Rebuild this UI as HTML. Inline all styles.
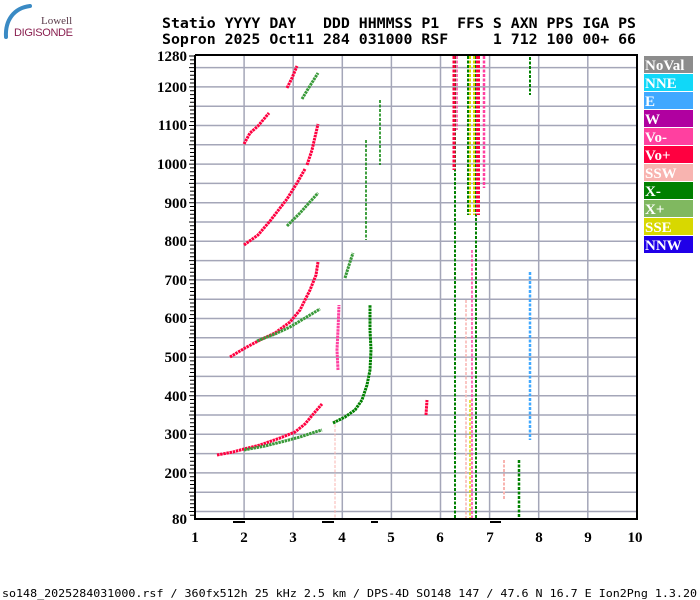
<!DOCTYPE html>
<html><head><meta charset="utf-8"><style>
body{margin:0;background:#fff;width:700px;height:600px;overflow:hidden}
svg{display:block}
</style></head><body>
<svg width="700" height="600" xmlns="http://www.w3.org/2000/svg">
<!-- logo -->
<path d="M6,37 C5,20 14,8 30,6" fill="none" stroke="#3a8ac4" stroke-width="4" stroke-linecap="round"/>
<text x="41" y="24" font-family="Liberation Serif,serif" font-size="11" fill="#5a3a4a">Lowell</text>
<text x="14" y="36" font-family="Liberation Sans,sans-serif" font-size="11" fill="#8a2050" textLength="59">DIGISONDE</text>
<!-- header -->
<g font-family="DejaVu Sans Mono,Liberation Mono,monospace" font-size="14.5" font-weight="bold" fill="#000">
<text x="162" y="28" xml:space="preserve" textLength="474" lengthAdjust="spacingAndGlyphs">Statio YYYY DAY   DDD HHMMSS P1  FFS S AXN PPS IGA PS</text>
<text x="162" y="44" xml:space="preserve" textLength="474" lengthAdjust="spacingAndGlyphs">Sopron 2025 Oct11 284 031000 RSF     1 712 100 00+ 66</text>
</g>
<!-- grid -->
<g stroke="#a4a6b8" stroke-width="1.5">
<line x1="195" y1="67.6" x2="637" y2="67.6"/><line x1="195" y1="86.9" x2="637" y2="86.9"/><line x1="195" y1="106.2" x2="637" y2="106.2"/><line x1="195" y1="125.5" x2="637" y2="125.5"/><line x1="195" y1="144.8" x2="637" y2="144.8"/><line x1="195" y1="164.1" x2="637" y2="164.1"/><line x1="195" y1="183.4" x2="637" y2="183.4"/><line x1="195" y1="202.7" x2="637" y2="202.7"/><line x1="195" y1="222" x2="637" y2="222"/><line x1="195" y1="241.3" x2="637" y2="241.3"/><line x1="195" y1="260.6" x2="637" y2="260.6"/><line x1="195" y1="279.9" x2="637" y2="279.9"/><line x1="195" y1="299.2" x2="637" y2="299.2"/><line x1="195" y1="318.5" x2="637" y2="318.5"/><line x1="195" y1="337.8" x2="637" y2="337.8"/><line x1="195" y1="357.1" x2="637" y2="357.1"/><line x1="195" y1="376.4" x2="637" y2="376.4"/><line x1="195" y1="395.7" x2="637" y2="395.7"/><line x1="195" y1="415" x2="637" y2="415"/><line x1="195" y1="434.3" x2="637" y2="434.3"/><line x1="195" y1="453.6" x2="637" y2="453.6"/><line x1="195" y1="472.9" x2="637" y2="472.9"/><line x1="195" y1="492.2" x2="637" y2="492.2"/><line x1="195" y1="511.5" x2="637" y2="511.5"/>
<line x1="244.1" y1="56" x2="244.1" y2="519"/><line x1="293.2" y1="56" x2="293.2" y2="519"/><line x1="342.3" y1="56" x2="342.3" y2="519"/><line x1="391.4" y1="56" x2="391.4" y2="519"/><line x1="440.5" y1="56" x2="440.5" y2="519"/><line x1="489.6" y1="56" x2="489.6" y2="519"/><line x1="538.7" y1="56" x2="538.7" y2="519"/><line x1="587.8" y1="56" x2="587.8" y2="519"/>
</g>
<!-- vertical band -->
<g stroke-dasharray="3 1.5">
<line x1="455" y1="56" x2="455" y2="519" stroke="#008000" stroke-width="2"/>
<line x1="454" y1="56" x2="454" y2="170" stroke="#ff0040" stroke-width="3"/>
<line x1="457" y1="56" x2="457" y2="130" stroke="#ff40a0" stroke-width="1.5"/>
<line x1="468" y1="56" x2="468" y2="215" stroke="#008000" stroke-width="2"/>
<line x1="470" y1="56" x2="470" y2="215" stroke="#d8d800" stroke-width="2"/>
<line x1="466" y1="300" x2="466" y2="519" stroke="#f8b4b0" stroke-width="1.5"/>
<line x1="476" y1="56" x2="476" y2="519" stroke="#008000" stroke-width="2"/>
<line x1="474" y1="56" x2="474" y2="215" stroke="#d8d800" stroke-width="2"/>
<line x1="478" y1="56" x2="478" y2="215" stroke="#ff0040" stroke-width="4"/>
<line x1="484" y1="56" x2="484" y2="188" stroke="#ff40a0" stroke-width="2.5"/>
<line x1="530" y1="272" x2="530" y2="440" stroke="#40a8ff" stroke-width="2.5"/>
<line x1="530" y1="57" x2="530" y2="95" stroke="#008000" stroke-width="2"/>
<line x1="519" y1="460" x2="519" y2="519" stroke="#008000" stroke-width="2.5"/>
<line x1="472" y1="250" x2="472" y2="519" stroke="#ff40a0" stroke-width="1.5"/>
<line x1="470" y1="400" x2="470" y2="519" stroke="#d8d800" stroke-width="1.5"/>
<line x1="504" y1="460" x2="504" y2="500" stroke="#f8b4b0" stroke-width="2"/>
<line x1="380" y1="100" x2="380" y2="165" stroke="#008000" stroke-width="1.5"/>
<line x1="366" y1="140" x2="366" y2="240" stroke="#008000" stroke-width="1.5"/>
<line x1="335" y1="420" x2="335" y2="519" stroke="#f8b4b0" stroke-width="1"/>
</g>
<!-- traces -->
<g fill="none" stroke-width="3" stroke-dasharray="2.5 0.7" stroke-linejoin="round">
<polyline stroke="#ff0040" points="217,455 233,452 244,449 260,445 280,438 295,432 305,424 315,412 322,404"/>
<polyline stroke="#3a9a3a" points="244,450 265,446 285,441 300,437 315,432 322,430"/>
<polyline stroke="#008000" points="333,423 345,417 355,410 362,400 367,385 370,370 371,350 370,330 370,305"/>
<polyline stroke="#ff0040" points="230,357 245,348 260,340 275,333 290,322 300,310 305,300 310,290 316,275 318,262"/>
<polyline stroke="#3a9a3a" points="257,341 275,334 290,327 305,318 320,309"/>
<polyline stroke="#ff40a0" points="338,370 337,350 338,330 339,305"/>
<polyline stroke="#3a9a3a" points="345,278 350,262 353,253"/>
<polyline stroke="#ff0040" points="244,245 258,235 270,221 287,199 297,183 305,169"/>
<polyline stroke="#3a9a3a" points="287,226 300,213 318,193"/>
<polyline stroke="#ff0040" points="244,144 250,133 258,126 269,113"/>
<polyline stroke="#ff0040" points="307,165 312,150 318,124"/>
<polyline stroke="#ff0040" points="287,88 292,78 297,66"/>
<polyline stroke="#3a9a3a" points="302,99 308,89 318,73"/>
<polyline stroke="#ff0040" points="426,415 427,400"/>
</g>
<!-- axes -->
<g stroke="#000" stroke-width="2">
<line x1="195" y1="55" x2="638" y2="55"/>
<line x1="195" y1="55" x2="195" y2="520"/>
<line x1="637" y1="55" x2="637" y2="520"/>
<line x1="194" y1="519" x2="638" y2="519"/>
<line x1="233" y1="522" x2="245" y2="522"/><line x1="322" y1="522" x2="334" y2="522"/><line x1="371" y1="522" x2="378" y2="522"/><line x1="490" y1="522" x2="501" y2="522"/>
</g>
<path d="M190,59.9h5M190,63.7h5M190,71.4h5M190,75.3h5M190,79.2h5M190,83h5M190,90.7h5M190,94.6h5M190,98.5h5M190,102.3h5M190,110h5M190,113.9h5M190,117.8h5M190,121.6h5M190,129.3h5M190,133.2h5M190,137.1h5M190,140.9h5M190,148.6h5M190,152.5h5M190,156.4h5M190,160.2h5M190,167.9h5M190,171.8h5M190,175.7h5M190,179.5h5M190,187.2h5M190,191.1h5M190,195h5M190,198.8h5M190,206.5h5M190,210.4h5M190,214.3h5M190,218.1h5M190,225.8h5M190,229.7h5M190,233.6h5M190,237.4h5M190,245.1h5M190,249h5M190,252.9h5M190,256.7h5M190,264.4h5M190,268.3h5M190,272.2h5M190,276h5M190,283.7h5M190,287.6h5M190,291.5h5M190,295.3h5M190,303h5M190,306.9h5M190,310.8h5M190,314.6h5M190,322.3h5M190,326.2h5M190,330.1h5M190,333.9h5M190,341.6h5M190,345.5h5M190,349.4h5M190,353.2h5M190,360.9h5M190,364.8h5M190,368.7h5M190,372.5h5M190,380.2h5M190,384.1h5M190,388h5M190,391.8h5M190,399.5h5M190,403.4h5M190,407.3h5M190,411.1h5M190,418.8h5M190,422.7h5M190,426.6h5M190,430.4h5M190,438.1h5M190,442h5M190,445.9h5M190,449.7h5M190,457.4h5M190,461.3h5M190,465.2h5M190,469h5M190,476.7h5M190,480.6h5M190,484.5h5M190,488.3h5M190,496h5M190,499.9h5M190,503.8h5M190,507.6h5M190,515.3h5M189,56h6M189,67.6h6M189,86.9h6M189,106.2h6M189,125.5h6M189,144.8h6M189,164.1h6M189,183.4h6M189,202.7h6M189,222h6M189,241.3h6M189,260.6h6M189,279.9h6M189,299.2h6M189,318.5h6M189,337.8h6M189,357.1h6M189,376.4h6M189,395.7h6M189,415h6M189,434.3h6M189,453.6h6M189,472.9h6M189,492.2h6M189,511.5h6" stroke="#000" stroke-width="1"/>
<!-- y labels -->
<g font-family="Liberation Serif,serif" font-size="15" font-weight="bold" text-anchor="end">
<text x="187" y="61">1280</text><text x="187" y="92">1200</text><text x="187" y="130">1100</text><text x="187" y="169">1000</text><text x="187" y="208">900</text><text x="187" y="246">800</text><text x="187" y="285">700</text><text x="187" y="323">600</text><text x="187" y="362">500</text><text x="187" y="401">400</text><text x="187" y="439">300</text><text x="187" y="478">200</text><text x="187" y="524">80</text>
</g>
<g font-family="Liberation Serif,serif" font-size="15" font-weight="bold" text-anchor="middle">
<text x="195" y="542">1</text><text x="244" y="542">2</text><text x="293" y="542">3</text><text x="342" y="542">4</text><text x="391" y="542">5</text><text x="440" y="542">6</text><text x="490" y="542">7</text><text x="539" y="542">8</text><text x="588" y="542">9</text><text x="635" y="542">10</text>
</g>
<!-- legend -->
<g font-family="Liberation Serif,serif" font-size="15" font-weight="bold" fill="#fff">
<rect x="644" y="56" width="49" height="17" fill="#8c8c8c"/><text x="645" y="70">NoVal</text>
<rect x="644" y="74" width="49" height="17" fill="#10d8f8"/><text x="645" y="88">NNE</text>
<rect x="644" y="92" width="49" height="17" fill="#40a8ff"/><text x="645" y="106">E</text>
<rect x="644" y="110" width="49" height="17" fill="#b000a0"/><text x="645" y="124">W</text>
<rect x="644" y="128" width="49" height="17" fill="#ff40a0"/><text x="645" y="142">Vo-</text>
<rect x="644" y="146" width="49" height="17" fill="#ff0040"/><text x="645" y="160">Vo+</text>
<rect x="644" y="164" width="49" height="17" fill="#f8b4b0"/><text x="645" y="178">SSW</text>
<rect x="644" y="182" width="49" height="17" fill="#008000"/><text x="645" y="196">X-</text>
<rect x="644" y="200" width="49" height="17" fill="#80b860"/><text x="645" y="214">X+</text>
<rect x="644" y="218" width="49" height="17" fill="#d8d800"/><text x="645" y="232">SSE</text>
<rect x="644" y="236" width="49" height="17" fill="#2000e8"/><text x="645" y="250">NNW</text>
</g>
<text x="2" y="597" font-family="DejaVu Sans Mono,monospace" font-size="11" fill="#000" textLength="695" lengthAdjust="spacingAndGlyphs">so148_2025284031000.rsf / 360fx512h 25 kHz 2.5 km / DPS-4D SO148 147 / 47.6 N 16.7 E  Ion2Png 1.3.20</text>
</svg>
</body></html>
